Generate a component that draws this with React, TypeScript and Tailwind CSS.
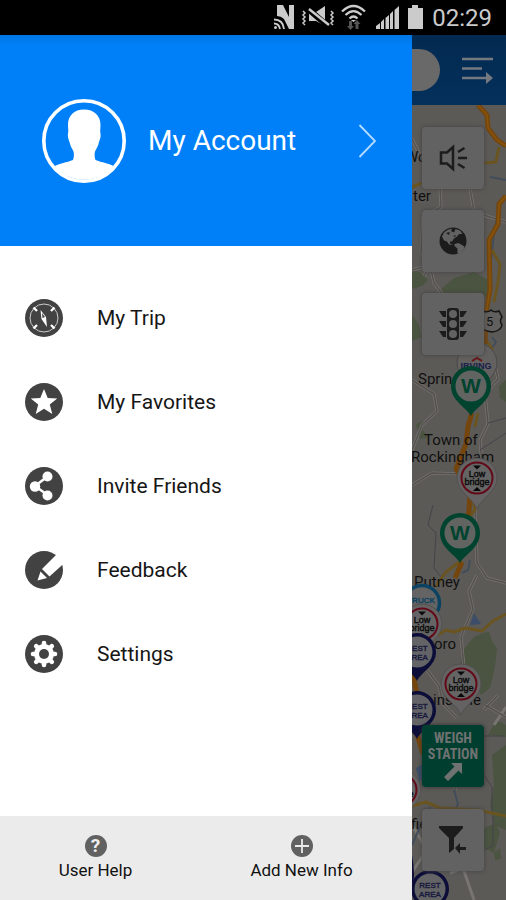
import React from "react";

const ink = "#424242";

function StatusBar() {
  return (
    <header className="flex h-[35px] items-center justify-end bg-black pr-[14px] text-[#cbcbcb]">
      <svg width="154" height="30" viewBox="271 3 154 30" className="mr-[6px]" fill="currentColor" aria-hidden="true">
        <path d="M276 5h6l6 12V5h5v24h-5l-5-10q-3-3-7-3z" />
        <g fill="none" stroke="currentColor" strokeWidth="1.800">
          <path d="M273 19.500q9 0 10 9.500M273 23.500q5 0 6 5.500" />
        </g>
        <circle cx="274.500" cy="27.500" r="1.500" />
        <path d="M308 12h7l9-6v20l-9-5h-7z" />
        <path d="M306 8l22 19" stroke="#000" strokeWidth="6" />
        <path d="M308 9l20 16" stroke="currentColor" strokeWidth="2.500" />
        <path d="M302 11l2 2-2 2 2 2-2 2 2 2-2 2 2 2M330 11l2 2-2 2 2 2-2 2 2 2-2 2 2 2" fill="none" stroke="currentColor" strokeWidth="1.500" />
        <g fill="none" stroke="currentColor" strokeWidth="2.200">
          <path d="M341 11.500q11.500-11 23 0M344.500 15q8-8 16 0M348.500 18.500q4-4 8 0" />
        </g>
        <path d="M350 20h5l-2.500 2z" />
        <path d="M348 21h3v5h2l-3.500 4-3.500-4h2zM354.500 29v-5H352.500l3.500-4 3.500 4h-2v5z" fill="#555" />
        <path d="M375 29v-3l4-3v6zM380 29v-7l3-3v10zM384.500 29V18l3.500-3v14zM389 29V14l3-3v18zM393.500 29V10l4.500-4v23z" />
        <path d="M411 5h6v3h5v21h-15V8h4z" />
      </svg>
      <time className="text-[24px] leading-[30px]">02:29</time>
    </header>
  );
}

function CompassIcon() {
  return (
    <svg width="38" height="38" viewBox="0 0 38 38" aria-hidden="true">
      <circle cx="19" cy="19" r="19" fill={ink} />
      <circle cx="19" cy="19" r="14" fill="none" stroke="#ccc" strokeWidth="1" />
      <path d="M8.500 8.500l3.500 3.500M29.500 8.500l-3.500 3.500M8.500 29.500l3.500-3.500M29.500 29.500l-3.500-3.500" stroke="#fff" strokeWidth="2.400" />
      <path d="M15.500 11l5.500 7 1 10-5.500-8z" fill="#fff" />
      <path d="M17 14l3 4-2.500 1z" fill={ink} />
    </svg>
  );
}

function StarIcon() {
  return (
    <svg width="38" height="38" viewBox="0 0 38 38" aria-hidden="true">
      <circle cx="19" cy="19" r="19" fill={ink} />
      <path d="M19 6l3.700 9 9.500.600-7.400 6 2.500 9.400-8.300-5.200-8.300 5.200 2.500-9.400-7.400-6 9.500-.600z" fill="#fff" />
    </svg>
  );
}

function ShareIcon() {
  return (
    <svg width="38" height="38" viewBox="0 0 38 38" aria-hidden="true">
      <circle cx="19" cy="19" r="19" fill={ink} />
      <path d="M22.500 9.500L10 19l12.500 9" fill="none" stroke="#fff" strokeWidth="2.500" />
      <circle cx="22.500" cy="9.500" r="5" fill="#fff" />
      <circle cx="10" cy="19.500" r="5.200" fill="#fff" />
      <circle cx="22.500" cy="28.500" r="5" fill="#fff" />
    </svg>
  );
}

function PencilIcon() {
  return (
    <svg width="38" height="38" viewBox="0 0 38 38" aria-hidden="true">
      <circle cx="19" cy="19" r="19" fill={ink} />
      <path d="M33 2L17 18l7.500 7.500L40 11.500V0z" fill="#fff" />
      <path d="M15.500 20.500l6.500 6.500-9.500 2.500z" fill="#fff" />
    </svg>
  );
}

function GearIcon() {
  return (
    <svg width="38" height="38" viewBox="0 0 38 38" aria-hidden="true">
      <circle cx="19" cy="19" r="19" fill={ink} />
      <circle cx="19" cy="19" r="10" fill="#fff" />
      <g stroke="#fff" strokeWidth="4.600" strokeLinecap="round">
        <path d="M19 8v22M8 19h22M11.200 11.200l15.600 15.600M26.800 11.200L11.200 26.800" />
      </g>
      <circle cx="19" cy="19" r="5" fill={ink} />
    </svg>
  );
}

const entries = [
  { label: "My Trip", Icon: CompassIcon },
  { label: "My Favorites", Icon: StarIcon },
  { label: "Invite Friends", Icon: ShareIcon },
  { label: "Feedback", Icon: PencilIcon },
  { label: "Settings", Icon: GearIcon },
];

function Drawer() {
  return (
    <aside className="flex min-w-0 flex-1 flex-col bg-white">
      <button className="flex h-[211px] items-center bg-[#0080f8] bg-linear-to-b from-[#0076e4] to-[#0080f8] to-[5%] pr-[36px] pl-[42px] text-left text-white">
        <svg width="84" height="84" viewBox="0 0 84 84" className="shrink-0" aria-hidden="true">
          <circle cx="42" cy="42" r="40.200" fill="none" stroke="#fff" strokeWidth="3.600" />
          <path
            d="M42 10.500c10 0 16.500 6 16.500 15.500 0 3-.5 5-.2 7.500 1 4-.5 7-1.300 9.500-.8 4-2.500 6.500-4 9.500-.7 3-.5 6 .5 8.500 6 2.500 14 3.500 19 6.500A41 41 0 0 1 12 67.500c5-3 13-4 19-6.500 1-2.500 1.200-5.500.500-8.500-1.500-3-3.200-5.500-4-9.500-.8-2.500-2.300-5.500-1.300-9.500.3-2.500-.2-4.500-.2-7.500 0-9.500 6-15.500 16-15.500z"
            fill="#fff"
          />
        </svg>
        <span className="ml-[22px] flex-1 text-[28px] leading-[32px]">My Account</span>
        <svg width="18" height="36" viewBox="0 0 18 36" fill="none" stroke="#b5daff" strokeWidth="1.800" aria-hidden="true">
          <path d="M1.500 2L17 18 1.500 34" />
        </svg>
      </button>
      <nav className="flex-1 pt-[30px]">
        <ul>
          {entries.map(({ label, Icon }) => (
            <li key={label}>
              <a href="#" className="flex h-[84px] items-center gap-[34px] pl-[25px] text-[21px] leading-[26px] text-[#161616]">
                <Icon />
                {label}
              </a>
            </li>
          ))}
        </ul>
      </nav>
      <footer className="grid h-[84px] grid-cols-2 bg-[#ebebeb] text-[17px] leading-[22px] text-[#111]">
        <button className="flex flex-col items-center pt-[19px] pr-[15px]">
          <span className="flex size-[22px] items-center justify-center rounded-full bg-[#616161] text-[19px] leading-[22px] font-bold text-[#eee]">?</span>
          <span className="mt-[2px]">User Help</span>
        </button>
        <button className="flex flex-col items-center pt-[19px] pr-[15px]">
          <svg width="22" height="22" viewBox="0 0 22 22" aria-hidden="true">
            <circle cx="11" cy="11" r="11" fill="#616161" />
            <path d="M11 4v14M4 11h14" stroke="#ebebeb" strokeWidth="1.800" />
          </svg>
          <span className="mt-[2px]">Add New Info</span>
        </button>
      </footer>
    </aside>
  );
}

type PinProps = { x: number; y: number };

function WeighPin({ x, y }: PinProps) {
  return (
    <g transform={`translate(${x} ${y})`}>
      <path d="M0 29C-4 21-20 14-20-1a20 20 0 0 1 40 0C20 14 4 21 0 29z" fill="#00432f" />
      <circle cy="-1" r="15.500" fill="#626462" />
      <text y="6" textAnchor="middle" className="font-['Liberation_Sans',sans-serif] text-[21px] font-bold" fill="#00432f">W</text>
    </g>
  );
}

function BridgePin({ x, y }: PinProps) {
  return (
    <g transform={`translate(${x} ${y})`}>
      <path d="M0 31C-4 20-20 14-20 0a20 20 0 0 1 40 0C20 14 4 20 0 31z" fill="#646262" stroke="#53514f" />
      <circle r="15.500" fill="#656565" stroke="#620a18" strokeWidth="2" />
      <path d="M-4-12.500h8l-4 4zM-4 13h8l-4-4z" fill="#080808" />
      <g textAnchor="middle" className="font-['Liberation_Sans',sans-serif] text-[9px]" fill="#0b0b0b" stroke="#0b0b0b" strokeWidth="0.400">
        <text y="-1">Low</text>
        <text y="7">bridge</text>
      </g>
    </g>
  );
}

function RestPin({ x, y }: PinProps) {
  return (
    <g transform={`translate(${x} ${y})`}>
      <path d="M0 29C-4 20-19 14-19 0a19 19 0 0 1 38 0C19 14 4 20 0 29z" fill="#0c0d39" />
      <circle r="15.500" fill="#646466" />
      <g textAnchor="middle" className="font-['Liberation_Sans',sans-serif] text-[8px]" fill="#181a3d" stroke="#181a3d" strokeWidth="0.400">
        <text y="-1">REST</text>
        <text y="8">AREA</text>
      </g>
    </g>
  );
}

function MapCanvas() {
  return (
    <svg className="absolute inset-0 h-full w-full" viewBox="412 105 94 795" preserveAspectRatio="xMinYMin slice" role="img" aria-label="Map">
      <rect x="412" y="105" width="1200" height="1600" fill="#5c5a57" />
      <g fill="#4a5440">
        <path d="M412 270l8 2 8 8-6 6-10 3zM440 290l14-12 20-6 14 8 2 14-7 4-25-5-14 2zM412 315l6 8 4 14-10 4zM499 386l7-6v22l-6-4zM416 424l8-3-2 8 6 9-8 1z" />
        <path d="M489 632l3 9 5 8-2 18-5 21-9 7-10-24-11-2 2-18 12-14 9-4zM492 755l14-10v85l-12-5-4-20 4-20zM484 828l12-5 4 10-6 20-10-5zM494 853l6-5 1 11-6 1zM488 735l8-15 10 5v12z" />
      </g>
      <g fill="none" stroke="#777471" strokeWidth="3" strokeLinejoin="round">
        <path d="M412 139l9 18M440 187l1 20-18 10-2 35 9 13-6 11M470 188l4 24 32 10M412 270l18-5 4 18 14 18M412 380l22 14 3 17-15 14-10 25M494 360l4 19-13 15 3 30-8 16 3 38-8 25 2 60 10 15 23 6" />
        <path d="M412 485l20-12 30 1M477 575l-8 16 4 18-12 28 3 30M427 670l12 16 4 18 14 14M485 705l21 12M498 695l-14 15M494 725l12-18M455 790l8-30M412 825l15 25-15 22M450 873l13-5 11 32" />
      </g>
      <g fill="none" stroke="#53504e" strokeWidth="1.500" strokeLinejoin="round">
        <path d="M412 139l9 18M440 187l1 20-18 10-2 35 9 13-6 11M470 188l4 24 32 10M412 270l18-5 4 18 14 18M412 380l22 14 3 17-15 14-10 25M494 360l4 19-13 15 3 30-8 16 3 38-8 25 2 60 10 15 23 6" />
        <path d="M412 485l20-12 30 1M477 575l-8 16 4 18-12 28 3 30M427 670l12 16 4 18 14 14M485 705l21 12M498 695l-14 15M455 790l8-30" />
      </g>
      <g fill="none" stroke="#45434a" strokeWidth="1">
        <path d="M433 505l-5 20 8 8-2 35 8 10M480 450l26-17M488 423l18-5M484 736h20M484 775l8 12v25M470 870l14-20 9-4v-30" />
      </g>
      <g fill="none" stroke="#424d5b" strokeWidth="2">
        <path d="M499 208l-5 25-3 28M492 337l4 5-7 10M470 560l-2 10-6 3M490 177l16 3M412 845l8-18 10-20M454 790l4 14-4 8" />
      </g>
      <path d="M470 625l4-12 7 11zM416 768l9-5v15l-6 3z" fill="#3b4d68" />
      <g fill="none" strokeLinejoin="round">
        <path d="M499 147l-3 15-12 1M412 187l10-4M492 250l8 14-2 18-4 20M486 340l6 9-5 5M478 413l-3 14M473 500l2 10-10 12M462 560l-16 12-10 14M438 635l8-5 8 2 11-4 17 3 11-10 13-7M412 806l14-4 14 6 38 2 28 6" stroke="#6a5420" strokeWidth="3" />
        <path d="M478 105l9 10 1 13 9 12 9 6M506 196l-7 8-1 20-9 16 1 50-4 22-1 32M472 413l-4 13-2 18-10 25 14 22-1 20-5 15M462 562l-7 16M412 670l5 24v40l6 20" stroke="#74450c" strokeWidth="5" />
        <path d="M478 105l9 10 1 13 9 12 9 6M506 196l-7 8-1 20-9 16 1 50-4 22" stroke="#85520d" strokeWidth="2" />
      </g>
      <g fill="#101010" className="text-[15px]">
        <text x="405" y="162">Wo</text>
        <text x="413" y="201">ter</text>
        <text x="418" y="384">Spring</text>
        <text x="424" y="445">Town of</text>
        <text x="411" y="462">Rockingham</text>
        <text x="414" y="587">Putney</text>
        <text x="434" y="649">oro</text>
        <text x="433" y="705">insdale</text>
        <text x="411" y="829">fie</text>
      </g>
      <path d="M483 311q5 2 8-1 3 3 8 1l3 6q-3 4 0 8-1 6-10 7-10-1-11-7 3-4 0-8z" fill="#62605e" stroke="#151515" strokeWidth="1.500" />
      <text x="486" y="326" className="text-[13px]" fill="#101010">5</text>
      <path d="M477 396C472 382 457 377 457 363a20 20 0 0 1 40 0C497 377 482 382 477 396z" fill="#62615f" stroke="#4a4948" />
      <path d="M472 361l5-3 5 3" stroke="#68131a" strokeWidth="2" fill="none" />
      <text x="476" y="369" textAnchor="middle" className="font-['Liberation_Sans',sans-serif] text-[9px] font-bold" fill="#17204b">IRVING</text>
      <WeighPin x={471} y={387} />
      <BridgePin x={477} y={478} />
      <WeighPin x={460} y={534} />
      <circle cx="422" cy="603" r="17.500" fill="#646464" stroke="#0c4262" strokeWidth="3.500" />
      <text x="421" y="603" textAnchor="middle" className="font-['Liberation_Sans',sans-serif] text-[8px]" fill="#0c4262" stroke="#0c4262" strokeWidth="0.400">TRUCK</text>
      <BridgePin x={422} y={624} />
      <RestPin x={417} y={652} />
      <RestPin x={417} y={710} />
      <BridgePin x={461} y={684} />
      <BridgePin x={401} y={790} />
      <path d="M412 855q4 22 0 34z" fill="#0c0d39" />
      <RestPin x={430} y={889} />
    </svg>
  );
}

function MapButton({ label, children }: { label: string; children: React.ReactNode }) {
  return (
    <button aria-label={label} className="flex size-[62px] items-center justify-center rounded-[4px] bg-[#626262] text-[#1c1c1c] shadow-[0_0_4px_#404040]">
      {children}
    </button>
  );
}

function MapPane() {
  return (
    <main className="flex w-[94px] shrink-0 flex-col">
      <div className="flex h-[70px] items-center justify-between bg-[#04305b] bg-linear-to-b from-[#032a51] to-[#04305b] pr-[13px]">
        <span className="h-[42px] w-[28px] rounded-r-full bg-[#696969]" />
        <button aria-label="Route list">
          <svg width="32" height="28" viewBox="0 0 32 28" fill="none" stroke="#747980" strokeWidth="2.500" aria-hidden="true">
            <path d="M1 3h31M1 12.500h20M1 22h26" />
            <path d="M25 16l7 6-7 6z" fill="#747980" stroke="none" />
          </svg>
        </button>
      </div>
      <div className="relative flex flex-1 flex-col justify-between overflow-hidden pt-[22px] pb-[29px] pl-[10px]">
        <MapCanvas />
        <div className="relative flex flex-col gap-[21px]">
          <MapButton label="Sound">
            <svg width="28" height="28" viewBox="0 0 28 28" fill="none" stroke="currentColor" strokeWidth="2.500" aria-hidden="true">
              <path d="M2 8.500h6l6-5.500v22l-6-5.500H2zM19 8l6.500-4M19 14h9M19 20l6.500 4" />
            </svg>
          </MapButton>
          <MapButton label="Map layers">
            <svg width="28" height="28" viewBox="0 0 28 28" aria-hidden="true">
              <circle cx="14" cy="14" r="13.500" fill="currentColor" />
              <path d="M5 5.500Q8.500 2 13 1.500L12 4l3 1.500L16.500 2 21 3.500 23.500 7 20 7l-2 2.500-3 2-2 3h-2l0 2 3 1.500-4-.5-2-3-3-1-2-4z" fill="#626262" />
              <path d="M15.500 17l4-1 6 3.500-.5 2.500-4.500 4.500-2 0 0-5-3-2.500z" fill="#626262" />
              <path d="M7 6l4-1-1 3zM14 9l3-1-1 2z" fill="currentColor" />
            </svg>
          </MapButton>
          <MapButton label="Traffic">
            <svg width="28" height="32" viewBox="0 0 28 32" fill="currentColor" aria-hidden="true">
              <path d="M0 3h7v6H4zM28 3h-7v6h3zM0 13h7v6H4zM28 13h-7v6h3zM0 23h7v6H4zM28 23h-7v6h3z" />
              <rect x="8" width="12" height="32" rx="3" />
              <g fill="#626262">
                <circle cx="14" cy="6" r="4" />
                <circle cx="14" cy="16" r="4" />
                <circle cx="14" cy="26" r="4" />
              </g>
            </svg>
          </MapButton>
        </div>
        <div className="relative flex flex-col gap-[22px]">
          <button className="flex size-[62px] flex-col items-center rounded-[4px] bg-[#003e30] pt-[5px] font-['Roboto_Condensed','Roboto',sans-serif] text-[14px] leading-[16px] font-bold text-[#707272] shadow-[0_0_4px_#303030]">
            <span>WEIGH</span>
            <span>STATION</span>
            <svg width="20" height="20" viewBox="0 0 20 20" fill="currentColor" aria-hidden="true">
              <path d="M8 1h11v11l-3.500-3.500L5 19l-4-4L11.500 4.500z" />
            </svg>
          </button>
          <MapButton label="Filter">
            <svg width="28" height="28" viewBox="0 0 28 28" fill="currentColor" aria-hidden="true">
              <path d="M0 0h24v2l-9 10v11l-5 4V12L0 2z" />
              <path d="M16 22l5-5v4h6v3h-6v4z" />
            </svg>
          </MapButton>
        </div>
      </div>
    </main>
  );
}

export default function App() {
  return (
    <div className="flex min-h-screen flex-col font-['Roboto',sans-serif]">
      <StatusBar />
      <div className="flex flex-1">
        <Drawer />
        <MapPane />
      </div>
    </div>
  );
}
